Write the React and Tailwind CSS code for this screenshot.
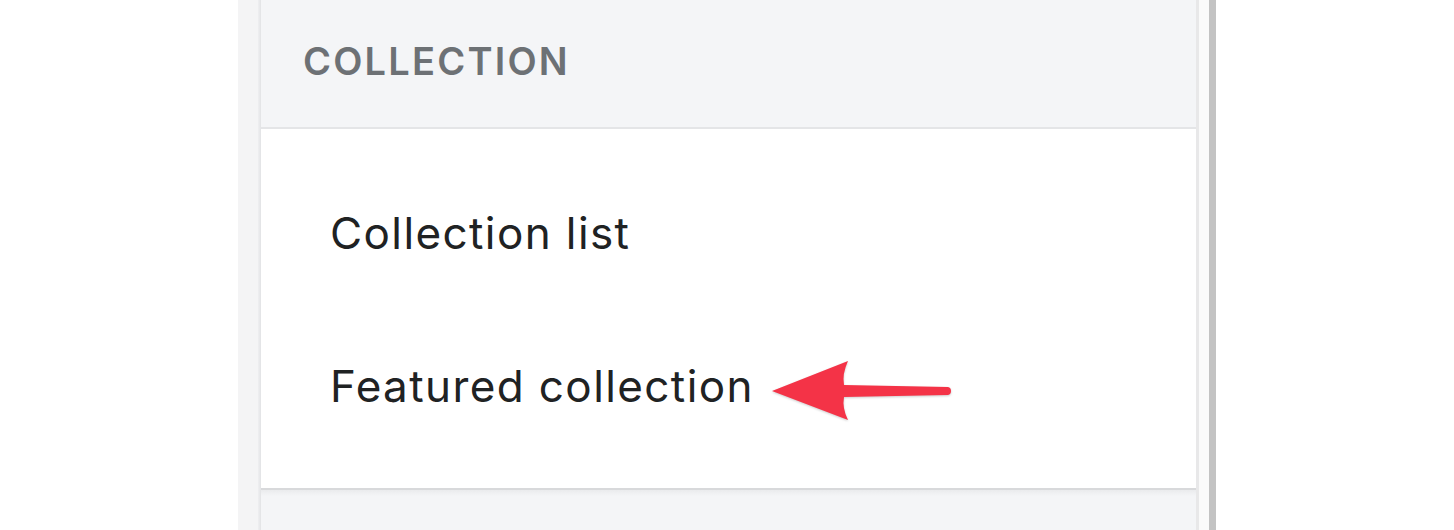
export default function App() {
  return (
    <div className="flex h-[530px] w-full overflow-hidden bg-white font-[Inter,sans-serif]">
      <div className="w-[238px] shrink-0" />
      <div className="w-[20px] shrink-0 bg-[#f4f4f5]" />
      <div className="w-[3px] shrink-0 bg-gradient-to-r from-[#efeff1] to-[#e2e3e5]" />

      <div className="flex w-[935px] shrink-0 flex-col bg-[#f4f5f7]">
        <div className="flex h-[127px] items-center pl-[42px] pb-[4px]">
          <span className="text-[38px] font-semibold uppercase tracking-[2.2px] text-[#6d7175]">
            Collection
          </span>
        </div>
        <div className="h-[2px] bg-[#e4e5e7]" />

        <div className="relative flex h-[359px] flex-col bg-white pt-[28px]">
          <div className="flex h-[153px] items-center pl-[69px] text-[44px] leading-[53px] tracking-[1.4px] text-[#202223]">
            Collection list
          </div>
          <div className="flex h-[153px] items-center pl-[69px] text-[44px] leading-[53px] tracking-[1.4px] text-[#202223]">
            Featured collection
          </div>

          <svg
            className="absolute left-[509px] top-[227px] drop-shadow-[0_1px_1px_rgba(0,0,0,0.2)]"
            width="184"
            height="70"
            viewBox="0 0 184 70"
          >
            <path
              d="M2 35 L78 5 Q72 18 74 29 L178 31 Q181 31.5 181 35 Q181 38.5 178 39 L74 41 Q72 52 78 64 Z"
              fill="#f43347"
            />
          </svg>
        </div>
        <div className="h-[2px] bg-[#d8d9db]" />
        <div className="h-[6px] bg-gradient-to-b from-[#eaebed] to-[#f4f5f7]" />
        <div className="flex-1" />
      </div>

      <div className="w-[3px] shrink-0 bg-[#e8e8e9]" />
      <div className="w-[10px] shrink-0 bg-[#fafafa]" />
      <div className="w-[7px] shrink-0 bg-[#c3c3c3]" />
      <div className="flex-1 bg-white" />
    </div>
  );
}
